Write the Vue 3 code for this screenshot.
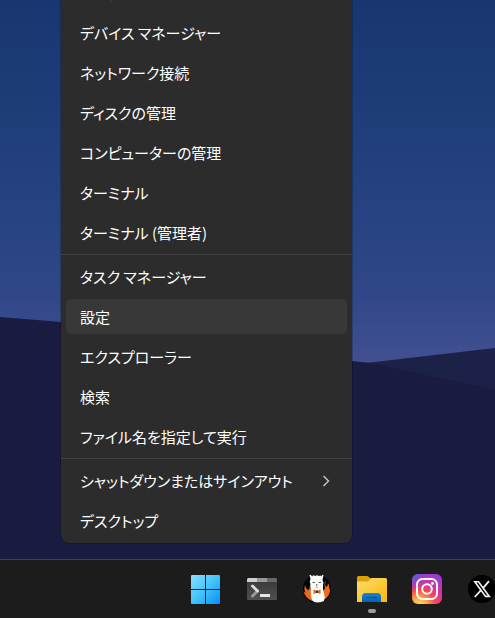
<template>
  <div class="screen">
    <main class="desktop">
      <svg class="wallpaper" viewBox="0 0 495 559" preserveAspectRatio="none" aria-hidden="true">
        <defs>
          <linearGradient id="sky" x1="0" y1="0" x2="0" y2="364" gradientUnits="userSpaceOnUse">
            <stop offset="0" stop-color="#193670" />
            <stop offset="0.35" stop-color="#1f3e7a" />
            <stop offset="0.8" stop-color="#2f4787" />
            <stop offset="1" stop-color="#425091" />
          </linearGradient>
        </defs>
        <rect width="495" height="559" fill="url(#sky)" />
        <path d="M350 364 L366 363 L495 348 V400 H350 Z" fill="#1c2148" />
        <path d="M0 317 L61 322 L352 361 L370 363 L495 390 V559 H0 Z" fill="#191b40" />
      </svg>

      <nav class="menu" aria-label="クイック リンク">
        <div v-for="(group, i) in groups" :key="i" class="group">
          <button
            v-for="item in group"
            :key="item.label"
            type="button"
            class="item"
            :class="{ active: item.label === active }"
            @mouseenter="active = item.label"
          >
            <span>{{ item.label }}</span>
            <svg v-if="item.submenu" class="chevron" viewBox="0 0 8 12" aria-hidden="true">
              <path d="M1.500 1 L6.500 6 L1.500 11" />
            </svg>
          </button>
        </div>
      </nav>
    </main>

    <footer class="taskbar">
      <button type="button" class="app" aria-label="スタート">
        <svg viewBox="0 0 32 32">
          <defs>
            <linearGradient id="win" x1="0" y1="2" x2="29" y2="31" gradientUnits="userSpaceOnUse">
              <stop offset="0" stop-color="#8be0ff" />
              <stop offset="0.5" stop-color="#3fc4fb" />
              <stop offset="1" stop-color="#0a8dfa" />
            </linearGradient>
          </defs>
          <path
            d="M1 2 H14 V16 H0 V3 Q0 2 1 2z M15 2 H28 Q29 2 29 3 V16 H15z M0 17 H14 V31 H1 Q0 31 0 30z M15 17 H29 V30 Q29 31 28 31 H15z"
            fill="url(#win)"
          />
        </svg>
      </button>

      <button type="button" class="app" aria-label="ターミナル">
        <svg viewBox="0 -1 32 32">
          <defs>
            <linearGradient id="term" x1="0" y1="0" x2="0" y2="1">
              <stop offset="0" stop-color="#383838" />
              <stop offset="1" stop-color="#505050" />
            </linearGradient>
          </defs>
          <rect x="1" y="4" width="30" height="22" rx="1.500" fill="url(#term)" />
          <path d="M2.500 4 H11 V8 H1 V5.500 Q1 4 2.500 4z" fill="#cfcfcf" />
          <path d="M11 4 h10 v4 h-10z" fill="#999" />
          <path d="M21 4 h8.500 q1.500 0 1.500 1.500 V8 H21z" fill="#686868" />
          <path d="M6.500 22 L11.500 17" stroke="#999" stroke-width="3" stroke-linecap="round" />
          <path d="M6.500 12 L11.500 17" stroke="#dcdcdc" stroke-width="3" stroke-linecap="round" />
          <rect x="14" y="20" width="10" height="3" fill="#e6e6e6" />
        </svg>
      </button>

      <button type="button" class="app" aria-label="アルパカ">
        <svg viewBox="0 1 32 32">
          <circle cx="16" cy="17" r="14" fill="#030303" />
          <path d="M4 13 q1 5 4 5 l1-4 q2 4 2 15 q-7-3-8.500-10 l2 2 q-2-4-0.500-8z" fill="#ef691d" />
          <path d="M24.500 9 q-1 4 0.500 6 q2-1 2-4 q2 3 1 6 l1-1 q1 8-7 12.500 q-1-7 0-10 l2-2 q-1-4 0-7.500z" fill="#ef691d" />
          <path
            d="M9.500 7 L8.500 3 Q10 2 11 4.500 Q12.500 2.500 14 4 Q16 2.500 18 4 Q19.500 3 20.500 4.500 Q21 2 22.500 3 L21.500 8 Q23 10.500 22 13 Q21.500 18 23 21 Q24.500 25 23 29 Q16 32 11.500 29 Q9 24 10 17 Q8.500 14 9.500 12 Q8 10 9.500 7z"
            fill="#fbfbf9"
          />
          <path d="M11.500 10.500 h2.500 M17.500 10.500 h2.500" fill="none" stroke="#333" stroke-width="0.800" />
          <path d="M14.800 12.500 h2 l-1 1.400z" fill="#252525" />
          <path d="M15.800 13.500 v1.500 M14.300 15.500 h3" stroke="#888" stroke-width="0.500" />
          <path d="M12.500 17.500 l3.500 1.500 l3.500-1.500 v4.500 l-3.500-1.500 l-3.500 1.500z" fill="#d8662b" />
          <rect x="15" y="18.500" width="2" height="2.500" fill="#463429" />
        </svg>
      </button>

      <button type="button" class="app running" aria-label="エクスプローラー">
        <svg viewBox="0 -1 32 32">
          <defs>
            <linearGradient id="folder" x1="0" y1="0" x2="1" y2="1">
              <stop offset="0" stop-color="#ffdc6c" />
              <stop offset="1" stop-color="#fbb908" />
            </linearGradient>
            <linearGradient id="tray" x1="0" y1="0" x2="0" y2="1">
              <stop offset="0" stop-color="#1784da" />
              <stop offset="1" stop-color="#0560ae" />
            </linearGradient>
          </defs>
          <path d="M1 10 V3.500 Q1 2 2.500 2 H10.500 Q12 2 13 3 L15.500 5.500 V10z" fill="#dda006" />
          <path d="M1 7.500 H12 L14.500 4.500 Q15 4 16 4 H29.500 Q31 4 31 5.500 V28 H1z" fill="url(#folder)" />
          <path d="M6 28 V22.500 Q6 19 9.500 19 H21.500 Q25 19 25 22.500 V28z" fill="url(#tray)" />
          <path d="M10.500 23.500 H20.500" stroke="#0a4b86" stroke-width="1" stroke-linecap="round" />
        </svg>
      </button>

      <button type="button" class="app" aria-label="Instagram">
        <svg viewBox="0 0 32 32">
          <defs>
            <radialGradient id="insta" cx="0.25" cy="1.05" r="1.100">
              <stop offset="0" stop-color="#ffdd62" />
              <stop offset="0.22" stop-color="#ffad48" />
              <stop offset="0.48" stop-color="#f64a50" />
              <stop offset="0.72" stop-color="#d732a4" />
              <stop offset="1" stop-color="#9a3bd0" />
            </radialGradient>
            <radialGradient id="instaBlue" cx="0" cy="0" r="0.600">
              <stop offset="0" stop-color="#4166df" />
              <stop offset="1" stop-color="#8a3fd0" stop-opacity="0" />
            </radialGradient>
          </defs>
          <rect x="1" y="1" width="30" height="30" rx="6" fill="url(#insta)" />
          <rect x="1" y="1" width="30" height="30" rx="6" fill="url(#instaBlue)" />
          <rect x="6" y="6" width="20" height="20" rx="5.500" fill="none" stroke="#fff" stroke-width="2" />
          <circle cx="16" cy="16" r="4.800" fill="none" stroke="#fff" stroke-width="2" />
          <circle cx="21.500" cy="10.500" r="1.400" fill="#fff" />
        </svg>
      </button>

      <button type="button" class="app" aria-label="X">
        <svg viewBox="0 0 32 32">
          <circle cx="16" cy="16" r="14" fill="#000" />
          <path d="M8.800 8.800 H12.500 L23.300 23.400 H19.600z" fill="#000" stroke="#f2f2f2" stroke-width="1.600" />
          <path d="M23 8.200 L17.200 14.800 M14.800 17.300 L8.800 24" stroke="#f2f2f2" stroke-width="1.800" />
        </svg>
      </button>
    </footer>
  </div>
</template>

<script setup>
import { ref } from "vue";

const active = ref("設定");

const groups = [
  [
    { label: "システム" },
    { label: "デバイス マネージャー" },
    { label: "ネットワーク接続" },
    { label: "ディスクの管理" },
    { label: "コンピューターの管理" },
    { label: "ターミナル" },
    { label: "ターミナル (管理者)" },
  ],
  [
    { label: "タスク マネージャー" },
    { label: "設定" },
    { label: "エクスプローラー" },
    { label: "検索" },
    { label: "ファイル名を指定して実行" },
  ],
  [{ label: "シャットダウンまたはサインアウト", submenu: true }, { label: "デスクトップ" }],
];
</script>

<style>
body {
  margin: 0;
  background: #1c1c1c;
}
</style>

<style scoped>
.screen {
  height: 100vh;
  display: flex;
  flex-direction: column;
  overflow: hidden;
  font-family: "Noto Sans CJK JP", sans-serif;
}
.desktop {
  position: relative;
  flex: 1;
  min-height: 0;
  display: flex;
  align-items: flex-end;
  padding: 0 61px 16px;
  overflow: hidden;
}
.wallpaper {
  position: absolute;
  inset: 0;
  width: 100%;
  height: 100%;
}
.menu {
  position: relative;
  width: 291px;
  padding-bottom: 2px;
  border-radius: 0 0 8px 8px;
  background: #2c2c2c;
  box-shadow: 0 0 0 1px rgba(0, 0, 0, 0.2);
}
.group {
  display: flex;
  flex-direction: column;
  gap: 5px;
  padding: 2px 5px 3px;
}
.group + .group {
  margin-top: 1px;
  padding-top: 4px;
  border-top: 1px solid #404040;
}
.item {
  display: flex;
  align-items: center;
  justify-content: space-between;
  height: 35px;
  padding: 0 17px 0 14px;
  border: 0;
  border-radius: 5px;
  background: transparent;
  color: #fff;
  font-family: inherit;
  font-size: 15px;
  font-weight: 400;
  font-feature-settings: "palt";
  line-height: 24px;
  white-space: nowrap;
}
.item.active {
  background: #383838;
}
.chevron {
  width: 8px;
  height: 12px;
  fill: none;
  stroke: #c8c8c8;
  stroke-width: 1.4;
}
.taskbar {
  display: flex;
  height: 58px;
  padding-left: 179px;
  border-top: 1px solid #424044;
  background: #1c1c1c;
  overflow: hidden;
}
.app {
  position: relative;
  flex: none;
  width: 55px;
  padding: 0 0 0 12px;
  border: 0;
  background: transparent;
  text-align: left;
}
.app svg {
  display: block;
  width: 32px;
  height: 32px;
}
.running::after {
  content: "";
  position: absolute;
  left: 24px;
  bottom: 5px;
  width: 8px;
  height: 4px;
  border-radius: 2px;
  background: #9d9d9d;
}
</style>
